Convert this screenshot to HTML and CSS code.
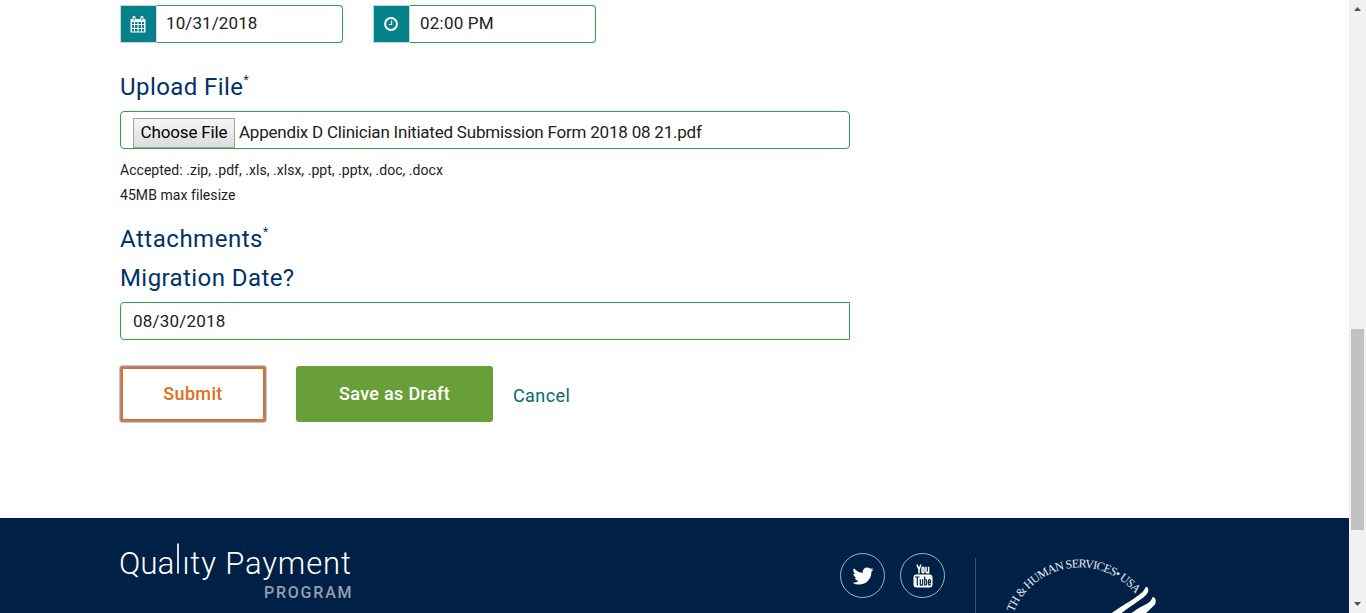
FILE: index.html
```html
<!DOCTYPE html>
<html lang="en">
<head>
<meta charset="utf-8">
<title>Quality Payment Program</title>
<link rel="stylesheet" href="styles.css">
</head>
<body>
<div class="page">
  <main class="form">
    <div class="datetime">
      <div class="group">
        <span class="addon">
          <svg width="16" height="17" viewBox="0 0 16 17"><path fill="#fff" d="M0.5 3h15v13.500h-15z"/><path fill="#fff" d="M2.500 1.200q0-1.200 1.500-1.200t1.500 1.200V4h-3zM10.500 1.200q0-1.200 1.500-1.200t1.500 1.200V4h-3z"/><path stroke="#048189" stroke-width="1" d="M4 1.500v3M12 1.500v3"/><path fill="#048189" d="M2 6h2v2H2zM5 6h2.500v2H5zM8.500 6H11v2H8.500zM12 6h2v2h-2zM2 9h2v3H2zM5 9h2.500v3H5zM8.500 9H11v3H8.500zM12 9h2v3h-2zM2 13h2v2.500H2zM5 13h2.500v2.500H5zM8.500 13H11v2.500H8.500zM12 13h2v2.500h-2z"/></svg>
        </span>
        <div class="control joined"><span class="t-date">10/31/2018</span></div>
      </div>
      <div class="group">
        <span class="addon">
          <svg width="14" height="14" viewBox="0 0 14 14" fill="none" stroke="#fff"><circle cx="7" cy="7" r="5.900" stroke-width="2"/><path stroke-width="1.200" d="M7.600 3.500v4H5"/></svg>
        </span>
        <div class="control joined time"><span class="t-time">02:00 PM</span></div>
      </div>
    </div>
    <h2 class="label upload"><span class="t-upload">Upload File</span><sup>*</sup></h2>
    <div class="control file"><button class="choose"><span class="t-choose">Choose File</span></button><span class="t-name">Appendix D Clinician Initiated Submission Form 2018 08 21.pdf</span></div>
    <p class="hint"><span class="t-accept">Accepted: .zip, .pdf, .xls, .xlsx, .ppt, .pptx, .doc, .docx</span></p>
    <p class="hint"><span class="t-size">45MB max filesize</span></p>
    <h2 class="label attach"><span class="t-attach">Attachments</span><sup>*</sup></h2>
    <h2 class="label migrate"><span class="t-migrate">Migration Date?</span></h2>
    <div class="control migration"><span class="t-mdate">08/30/2018</span></div>
    <div class="actions">
      <button class="btn submit"><span class="t-submit">Submit</span></button>
      <button class="btn draft"><span class="t-draft">Save as Draft</span></button>
      <a class="cancel"><span class="t-cancel">Cancel</span></a>
    </div>
  </main>
  <footer class="footer">
    <svg class="logo" width="240" height="70" viewBox="0 0 240 70">
      <text class="logo-a" x="-1" y="35.500" textLength="55.500" lengthAdjust="spacingAndGlyphs">Qua</text>
      <path class="stem" d="M58 5.500v30"/>
      <text class="logo-a" x="62.500" y="35.500" textLength="168.500">ıty Payment</text>
      <text class="logo-b" x="144" y="60" textLength="87.500">PROGRAM</text>
    </svg>
    <div class="social">
      <span class="circle"><svg width="24" height="24" viewBox="0 0 1792 1792"><path fill="#fff" d="M1684 408q-67 98-162 167 1 14 1 42 0 130-38 259.500t-115.500 248.500-184.500 210.500-258 146-323 54.500q-271 0-496-145 35 4 78 4 225 0 401-138-105-2-188-64.500t-114-159.500q33 5 61 5 43 0 85-11-112-23-185.500-111.500t-73.500-205.500v-4q68 38 146 41-66-44-105-115t-39-154q0-88 44-163 121 149 294.500 238.500t371.500 99.500q-8-38-8-74 0-134 94.500-228.500t228.500-94.500q140 0 236 102 109-21 205-78-37 115-142 178 93-10 186-50z"/></svg></span>
      <span class="circle"><svg width="20" height="24" viewBox="0 0 20 24"><path fill="none" stroke="#fff" stroke-width="1.500" d="M4 .5l2 5 2-5M6 5v4.500M9 4.200q0-1 1-1t1 1v3.600q0 1-1 1t-1-1zM13 2.700v5q0 1 1 1t1.500-1M15.600 2.700v6.800"/><rect x=".5" y="10.500" width="19" height="13" rx="3" fill="#fff"/><path fill="none" stroke="#002145" stroke-width="1.200" d="M2 13h4.500M4.300 13v8.500M7.300 15.200v5.300q0 .8.700.8t1.400-.9M9.600 15.200v6.300M11.700 12.500v9M11.700 16q1.900-.8 1.900.8v3q0 1.700-1.900 1M17.500 19.500q0 1.700-1 1.700t-1-1.500v-2.400q0-1.600 1-1.600t1 1.600v1h-2"/></svg></span>
    </div>
    <div class="divider"></div>
    <svg class="seal" width="190" height="95" viewBox="990 518 190 95">
      <path id="arc" fill="none" d="M1013.500 612.500A71.500 71.500 0 0 1 1148 617"/>
      <text class="seal-text"><textPath href="#arc" startOffset="0" textLength="149">TH &amp; HUMAN SERVICES• USA</textPath></text>
      <path fill="#fff" d="M1111 613.500C1123 605 1136 598 1142 592.500C1145 590 1145 587 1146.500 586.800C1149 588 1149 592 1146 595C1140 601 1130 606 1121 613.500zM1131 613.500C1139 607 1146 605 1150 601.500C1152.500 599 1152 597 1153.500 597C1156.500 599 1156.500 603 1153.500 606L1145.500 613.500z"/>
    </svg>
  </footer>
</div>
<div class="scrollbar"><i class="up"></i><i class="thumb"></i><i class="down"></i></div>
</body>
</html>
```
FILE: styles.css
```css
* { box-sizing: border-box; }
body { margin: 0; height: 613px; display: flex; overflow: hidden; background: #fff; font-family: Roboto, "Liberation Sans", sans-serif; color: #212121; }
svg { display: block; flex: none; }
button { font-family: inherit; margin: 0; }
span { white-space: nowrap; }
.page { width: 1349px; height: 613px; display: flex; flex-direction: column; }
.form { height: 518px; padding: 5px 0 0 120px; }
.datetime { display: flex; gap: 30px; height: 38px; }
.group { display: flex; width: 223px; }
.addon { width: 37px; height: 38px; padding-right: 1px; border: 1px solid #ced4da; background: #048189; display: flex; align-items: center; justify-content: center; }
.control { height: 38px; border: 1px solid #28a745; border-radius: 4px; font-size: 17px; display: flex; align-items: center; }
.joined { flex: 1; border-left: 0; border-radius: 0 4px 4px 0; padding: 0 0 2px 9px; }
.time { padding-left: 10px; }
.label { margin: 0; font-size: 24px; line-height: 28px; font-weight: 400; color: #003366; display: flex; }
.label sup { font-size: 12px; line-height: 14px; }
.upload { margin-top: 30px; }
.file { width: 730px; margin-top: 10px; padding: 5px 0 0 12px; gap: 4px; align-items: flex-start; line-height: 31px; }
.choose { width: 102px; height: 30px; margin-top: 1px; padding: 0 0 2px; border: 1px solid #a0a0a0; background: linear-gradient(#f6f6f6, #dcdcdc); font-size: 17px; line-height: 26px; color: #000; }
.hint { margin: 0; font-size: 14px; line-height: 25px; }
.control + .hint { margin-top: 9px; }
.attach { margin-top: 17px; }
.migrate { margin-top: 11px; }
.migration { width: 730px; margin-top: 10px; padding-left: 12px; border-radius: 4px 0 0 4px; }
.actions { display: flex; margin-top: 26px; height: 56px; font-size: 18px; }
.btn { height: 56px; padding: 0 0 2px; font-size: 18px; font-weight: 500; border: 0; border-radius: 3px; }
.submit { width: 146px; color: #e0701c; background: #fff; border: 3px solid #e0701c; outline: 1px solid #a58f98; outline-offset: -1px; box-shadow: 0 0 0 1px #a9c6f5; }
.draft { width: 197px; margin-left: 30px; background: #689f38; color: #fff; }
.cancel { margin: 19px 0 0 20px; line-height: 22px; color: #046b70; }
.footer { height: 95px; background: #002145; display: flex; padding-left: 120px; }
.logo { height: 70px; margin-top: 20px; overflow: visible; }
.logo-a { font-size: 31px; font-weight: 300; fill: #fff; }
.logo-b { font-size: 16px; font-weight: 500; fill: #90a0b4; }
.stem { stroke: #fff; stroke-width: 1.700; }
.social { display: flex; gap: 15px; margin: 35px 0 0 480px; }
.circle { width: 45px; height: 45px; border: 1px solid #76c6c5; border-radius: 50%; display: flex; align-items: center; justify-content: center; }
.divider { width: 1px; height: 55px; margin: 40px 14px 0 30px; background: #385375; }
.seal-text { font-family: "Liberation Serif", serif; font-size: 12px; fill: #e5eaf0; }
.scrollbar { width: 17px; height: 613px; background: #f1f1f1; display: flex; flex-direction: column; align-items: center; }
.up, .down { width: 7px; height: 4px; background: #505050; }
.up { margin-top: 7px; clip-path: polygon(50% 0, 100% 100%, 0 100%); }
.down { margin-top: 72px; clip-path: polygon(0 0, 100% 0, 50% 100%); }
.thumb { width: 13px; height: 201px; margin-top: 318px; background: #c1c1c1; }
.t-date { letter-spacing: .1px; }
.t-mdate { letter-spacing: .2px; }
.t-time { letter-spacing: .22px; }
.t-upload { letter-spacing: .42px; }
.t-choose { letter-spacing: -.15px; }
.t-name { letter-spacing: -.215px; }
.t-accept { letter-spacing: .035px; }
.t-size { letter-spacing: .06px; }
.t-attach { letter-spacing: .52px; }
.t-migrate { letter-spacing: .42px; }
.t-submit, .t-draft { letter-spacing: .33px; }
.t-cancel { letter-spacing: .4px; }
```
